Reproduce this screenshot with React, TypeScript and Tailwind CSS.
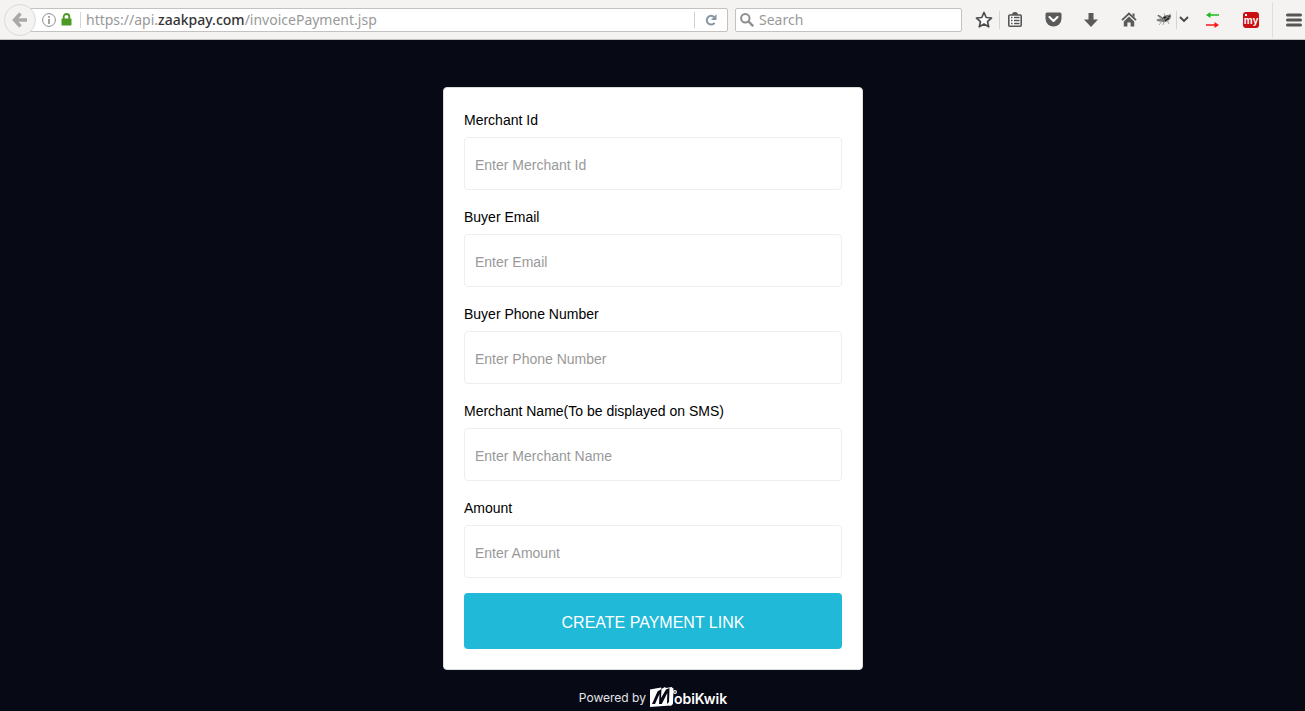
import type { ReactNode } from 'react';

const fields: { id: string; label: string; placeholder: string; type: string }[] = [
  { id: 'merchant-id', label: 'Merchant Id', placeholder: 'Enter Merchant Id', type: 'text' },
  { id: 'email', label: 'Buyer Email', placeholder: 'Enter Email', type: 'email' },
  { id: 'phone', label: 'Buyer Phone Number', placeholder: 'Enter Phone Number', type: 'tel' },
  { id: 'merchant-name', label: 'Merchant Name(To be displayed on SMS)', placeholder: 'Enter Merchant Name', type: 'text' },
  { id: 'amount', label: 'Amount', placeholder: 'Enter Amount', type: 'text' },
];

function ToolButton({ label, className = '', children }: { label: string; className?: string; children: ReactNode }) {
  return (
    <button type="button" aria-label={label} className={`flex h-5 shrink-0 items-center justify-center text-[#555] ${className}`}>
      {children}
    </button>
  );
}

function Toolbar() {
  return (
    <header className="flex h-10 w-full items-center border-b border-[#c4c2c0] bg-[#f4f3f1] pr-[3px] pl-1 font-['Noto_Sans',sans-serif]">
      <button
        type="button"
        aria-label="Back"
        className="z-10 -mr-4 flex size-8 shrink-0 items-center justify-center rounded-full border border-[#dcdad8] bg-[#f4f3f1]"
      >
        <svg width="16" height="16" viewBox="0 0 16 16" fill="none" stroke="#a9a9a9" strokeWidth="3.400">
          <path d="M8.500 1.500 2.500 8l6 6.500M3 8h12" />
        </svg>
      </button>
      <div className="flex h-6 min-w-0 flex-1 items-center rounded-xs border border-[#c4c2c0] bg-white pl-[21px]">
        <button type="button" aria-label="Site information" className="shrink-0">
          <svg width="14" height="14" viewBox="0 0 14 14" fill="none" stroke="#8c8c8c">
            <circle cx="7" cy="7" r="6.400" />
            <path d="M7 6v5M7 3v1.800" strokeWidth="1.600" />
          </svg>
        </button>
        <svg className="ml-[5px] shrink-0" width="11" height="13" viewBox="0 0 11 13">
          <path d="M2.700 6V3.800a2.800 2.800 0 0 1 5.600 0V6" fill="none" stroke="#4b9a26" strokeWidth="1.900" />
          <rect x=".5" y="5.500" width="10" height="7" rx=".8" fill="#4b9a26" />
        </svg>
        <span className="mr-[5px] ml-2 h-4 w-px shrink-0 bg-[#d6d6d6]" />
        <div className="min-w-0 flex-1 truncate text-sm text-[#999]">
          https://api.<span className="font-medium text-[#333]">zaakpay.com</span>/invoicePayment.jsp
        </div>
        <span className="h-4 w-px shrink-0 bg-[#d0d0d0]" />
        <button type="button" aria-label="Reload" className="flex w-8 shrink-0 items-center justify-center">
          <svg width="12" height="12" viewBox="0 0 12 12">
            <path d="M9.200 3.200A4.300 4.300 0 1 0 9.500 8.800" fill="none" stroke="#8797a5" strokeWidth="2" />
            <path d="M11.500 0v6H5.800z" fill="#8797a5" />
          </svg>
        </button>
      </div>
      <label className="ml-[7px] flex h-6 w-[227px] shrink-0 items-center gap-[5px] rounded-xs border border-[#c4c2c0] bg-white pl-1">
        <svg className="shrink-0" width="14" height="14" viewBox="0 0 14 14" fill="none" stroke="#8e8e8e" strokeWidth="2">
          <circle cx="5.300" cy="5.300" r="4.200" />
          <path d="m8.500 8.500 4.700 4.700" strokeWidth="2.400" />
        </svg>
        <input type="search" aria-label="Search" placeholder="Search" className="w-full min-w-0 bg-transparent text-sm outline-none placeholder:text-[#999]" />
      </label>
      <nav aria-label="Browser tools" className="ml-3 flex shrink-0 items-center">
        <ToolButton label="Bookmark" className="w-5">
          <svg width="18" height="17" viewBox="0 0 18 17" fill="#fff" stroke="#4d4d4d" strokeWidth="1.700" strokeLinejoin="round">
            <path d="m9 1.500 2.200 5 5.300.5-4 3.600 1.200 5.200L9 13l-4.700 2.800 1.200-5.200-4-3.600 5.300-.5z" />
          </svg>
        </ToolButton>
        <span className="mr-1.5 ml-[5px] h-[18px] w-px bg-[#d6d4d2]" />
        <ToolButton label="Bookmark list" className="w-[18px]">
          <svg width="14" height="15" viewBox="0 0 14 15">
            <path d="M4 3q0-3 3-3t3 3" fill="#555" />
            <rect x=".8" y="3" width="12.400" height="11.200" rx="1" fill="#fff" stroke="#555" strokeWidth="1.600" />
            <path d="M3 5.500h1.500M3 8.500h1.500M3 11.500h1.500M6 5.500h5.500M6 8.500h5.500M6 11.500h5.500" stroke="#555" strokeWidth="1.600" />
          </svg>
        </ToolButton>
        <ToolButton label="Pocket" className="ml-5 w-[18px]">
          <svg width="17" height="15" viewBox="0 0 17 15">
            <path d="M2 .5h13q1.500 0 1.500 1.500v4.500a8 8 0 0 1-16 0V2Q.5.500 2 .5z" fill="#5a5a5a" />
            <path d="m4.500 5 4 4 4-4" fill="none" stroke="#fff" strokeWidth="2.100" strokeLinecap="round" strokeLinejoin="round" />
          </svg>
        </ToolButton>
        <ToolButton label="Downloads" className="ml-5 w-[18px]">
          <svg width="14" height="14" viewBox="0 0 14 14" fill="#5a5a5a">
            <path d="M4.500 0h5v6.500H14L7 14 0 6.500h4.500z" />
          </svg>
        </ToolButton>
        <ToolButton label="Home" className="ml-5 w-[18px]">
          <svg width="16" height="15" viewBox="0 0 16 15">
            <path d="M1 8.200 8 1.500l7 6.700" fill="none" stroke="#555" strokeWidth="1.800" />
            <path d="M11.500 1.500h2v4l-2-1.900zM8 4.500l5.200 5v5H9.600v-4H6.400v4H2.800v-5z" fill="#5a5a5a" />
          </svg>
        </ToolButton>
        <ToolButton label="Firebug" className="ml-[18px] w-4">
          <svg width="16" height="13" viewBox="0 0 16 13">
            <path d="M6 5q2-3 5-3 5-1 4 2-1 4-6 5-5 1-3-4z" fill="#777" />
            <path d="M7 5.500 10 4M9 8l4-3M12 3h2" stroke="#222" strokeWidth="1.500" />
            <path d="M1 2q4-.5 7 4-5 .5-7-4zM0 7q4-3 8 0-4 4-8 0z" fill="#aaa" />
            <path d="M1 7h6M2 2l5 4" stroke="#444" strokeWidth=".8" />
            <path d="M6 8 3 12M8.500 8 7 12M11 7l2 4M12 3l3-2M9 3 8 .5" stroke="#999" strokeWidth=".9" fill="none" />
          </svg>
        </ToolButton>
        <span className="ml-1 h-[18px] w-px bg-[#d6d4d2]" />
        <ToolButton label="Firebug options" className="ml-0.5 w-[10px]">
          <svg width="10" height="7" viewBox="0 0 10 7" fill="none" stroke="#444" strokeWidth="1.800">
            <path d="m1 1 4 4 4-4" />
          </svg>
        </ToolButton>
        <ToolButton label="Proxy switch" className="ml-4 w-[14px]">
          <svg width="13" height="16" viewBox="0 0 13 16">
            <path d="M0 3 4.500 0v2.200H13v1.600H4.500V6z" fill="#1bbb1b" />
            <path d="M13 13 8.500 10v2.200H0v1.600h8.500V16z" fill="#f91818" />
          </svg>
        </ToolButton>
        <button
          type="button"
          className="ml-6 flex size-4 items-center justify-center rounded-[3px] bg-[#c90f12] bg-[radial-gradient(circle_at_3px_3px,white_1px,transparent_1px)] pt-0.5 font-['Liberation_Sans',sans-serif] text-[10px] leading-3 font-bold text-white"
        >
          my
        </button>
        <span className="ml-[13px] h-9 w-px bg-[#e0dedc]" />
        <ToolButton label="Menu" className="ml-[13px] w-4">
          <svg width="16" height="14" viewBox="0 0 16 14" stroke="#555" strokeWidth="3" strokeLinecap="round">
            <path d="M1.500 2h13M1.500 7h13M1.500 12h13" />
          </svg>
        </ToolButton>
      </nav>
    </header>
  );
}

export default function App() {
  return (
    <div className="flex min-h-screen flex-col bg-[#070914] font-['Liberation_Sans',Arial,sans-serif]">
      <Toolbar />
      <main className="flex flex-1 flex-col items-center pt-[47px] pr-4 pl-[17px]">
        <form onSubmit={(e) => e.preventDefault()} className="w-full max-w-[420px] rounded-sm border border-[#ddd] bg-white p-5">
          {fields.map((f) => (
            <div key={f.id} className="mb-[15px]">
              <label htmlFor={f.id} className="mb-[5px] block text-sm leading-6 text-black">
                {f.label}
              </label>
              <input
                id={f.id}
                type={f.type}
                placeholder={f.placeholder}
                className="block h-[53px] w-full rounded-sm border border-[#eee] bg-white px-2.5 pt-0.5 text-sm text-black outline-none placeholder:text-[#999]"
              />
            </div>
          ))}
          <button type="submit" className="block h-14 w-full rounded-sm bg-[#20b9d8] pt-1 text-base text-white">
            CREATE PAYMENT LINK
          </button>
        </form>
        <footer className="mt-[14px] flex h-6 items-center font-['Inter',sans-serif] text-white">
          <span className="pt-[3px] text-xs text-[#e4e4e8]">Powered by</span>
          <div className="ml-[3px] flex items-end">
            <svg width="28" height="21" viewBox="0 0 28 21" aria-hidden="true">
              <path d="M1 3.500 12 1.500l.5 1.500L16 1l1 1 6-1 .5 17-2 1.500L1 21z" fill="#fff" />
              <path d="M3 18 8.500 5.500 12.500 3l-.5 9L17 3.500 20.500 2 20 16l-2 2 .3-11-5.500 11H10l.5-10L6 18z" fill="#070914" />
              <path d="m23 1.500 1.500 1L24 17q-.5 3-4 3 2.500-1 2.500-3z" fill="#fff" />
              <circle cx="26" cy="6" r="1.400" fill="none" stroke="#fff" strokeWidth="1.100" />
            </svg>
            <span className="-ml-[3px] text-sm leading-4 font-semibold">obiKwik</span>
          </div>
        </footer>
      </main>
    </div>
  );
}
